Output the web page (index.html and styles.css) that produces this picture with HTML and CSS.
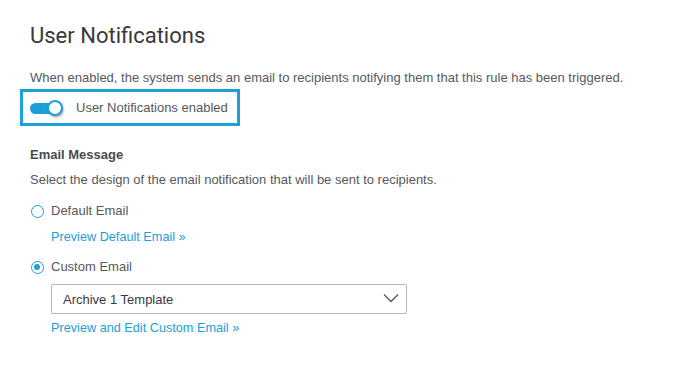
FILE: index.html
```html
<!DOCTYPE html>
<html>
<head>
<meta charset="utf-8">
<link rel="stylesheet" href="styles.css">
</head>
<body>
<div class="page">
  <h1 class="title">User Notifications</h1>
  <p class="desc">When enabled, the system sends an email to recipients notifying them that this rule has been triggered.</p>
  <div class="focus-box">
    <span class="toggle"><span class="track"></span><span class="knob"></span></span>
    <span class="toggle-label">User Notifications enabled</span>
  </div>
  <h2 class="section">Email Message</h2>
  <p class="desc2">Select the design of the email notification that will be sent to recipients.</p>
  <div class="option">
    <span class="radio"></span>
    <span class="opt-label">Default Email</span>
  </div>
  <a class="link link-default">Preview Default Email »</a>
  <div class="option option-custom">
    <span class="radio checked"></span>
    <span class="opt-label">Custom Email</span>
  </div>
  <div class="select">
    <span class="select-text">Archive 1 Template</span>
    <svg class="chevron" width="16" height="10" viewBox="0 0 16 10"><path d="M1 1.5 L8 8.5 L15 1.5" fill="none" stroke="#58585b" stroke-width="1.3"/></svg>
  </div>
  <a class="link link-custom">Preview and Edit Custom Email »</a>
</div>
</body>
</html>
```
FILE: styles.css
```css
html, body { margin: 0; padding: 0; background: #fff; }
body { font-family: "Liberation Sans", Arial, sans-serif; color: #58585b; }
.page { padding: 23px 30px 0 30px; display: flex; flex-direction: column; align-items: flex-start; }
.title { font-family: "Roboto", "Liberation Sans", sans-serif; font-weight: 400; font-size: 22px; line-height: 26px; margin: 0; color: #39393b; }
.desc { font-size: 13px; line-height: 16px; margin: 21px 0 0 0; }
.focus-box { box-sizing: border-box; margin: 3px 0 0 -10px; width: 220px; height: 37px; border: 3px solid #1ba0d7; display: flex; align-items: center; padding-left: 7px; }
.toggle { position: relative; width: 34px; height: 18px; display: inline-block; }
.track { position: absolute; left: 0; top: 4px; width: 24px; height: 11px; border-radius: 6px; background: #1ba0d7; }
.knob { box-sizing: border-box; position: absolute; left: 17px; top: 1px; width: 16px; height: 16px; border-radius: 50%; background: #fff; border: 2px solid #1ba0d7; box-shadow: 1px 1.5px 2px rgba(0,0,0,0.3); }
.toggle-label { font-size: 13px; margin-left: 12px; }
.section { font-size: 13px; font-weight: 700; margin: 21px 0 0 0; line-height: 16px; color: #4a4a4c; }
.desc2 { font-size: 13px; line-height: 16px; margin: 9px 0 0 0; }
.option { display: flex; align-items: center; margin-top: 15px; margin-left: 1px; }
.option-custom { margin-top: 14px; }
.radio { box-sizing: border-box; width: 13px; height: 13px; border: 1.5px solid #1ba0d7; border-radius: 50%; display: inline-block; position: relative; }
.radio.checked::after { content: ""; position: absolute; left: 2px; top: 2px; width: 6px; height: 6px; border-radius: 50%; background: #1ba0d7; }
.opt-label { font-size: 13px; margin-left: 7px; line-height: 16px; }
.link { color: #1ba0d7; font-size: 12.7px; line-height: 16px; margin: 10px 0 0 21px; }
.select { box-sizing: border-box; margin: 9px 0 0 21px; width: 356px; height: 30px; border: 1px solid #b6b6b6; border-radius: 2px; display: flex; align-items: center; justify-content: space-between; padding: 0 7px 0 11px; }
.select-text { font-size: 13px; color: #39393b; }
.chevron { margin-top: -3px; }
.link-custom { margin-top: 6px; }
```
